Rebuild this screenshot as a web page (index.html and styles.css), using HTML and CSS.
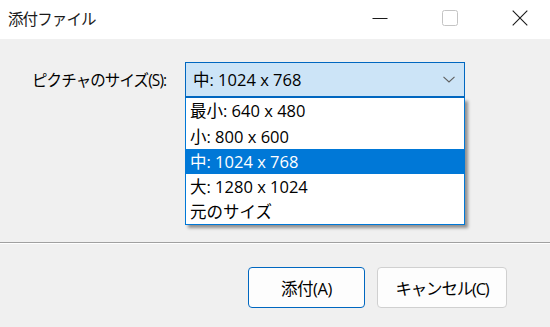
FILE: index.html
```html
<!DOCTYPE html>
<html lang="ja">
<head>
<meta charset="utf-8">
<title>添付ファイル</title>
<link rel="stylesheet" href="styles.css">
</head>
<body>
<div class="window">
  <header class="titlebar">
    <div class="title">添付ファイル</div>
    <div class="controls">
      <span class="ctl"><svg width="16" height="16" viewBox="0 0 16 16"><path d="M0.5 8.5h15" stroke="#1a1a1a" stroke-width="1"/></svg></span>
      <span class="ctl"><svg width="16" height="16" viewBox="0 0 16 16"><rect x="0.5" y="0.5" width="15" height="15" rx="2" fill="none" stroke="#c4c4c4" stroke-width="1"/></svg></span>
      <span class="ctl"><svg width="16" height="16" viewBox="0 0 16 16"><path d="M0.7 0.7L15.3 15.3M15.3 0.7L0.7 15.3" stroke="#1a1a1a" stroke-width="1.1"/></svg></span>
    </div>
  </header>
  <main class="content">
    <div class="row">
      <label class="label">ピクチャのサイズ(S):</label>
      <div class="combo-wrap">
        <div class="combo">
          <span class="combo-text">中: 1024 x 768</span>
          <svg class="chev" width="12" height="7" viewBox="0 0 12 7"><path d="M0.5 0.8L6 6L11.5 0.8" fill="none" stroke="#5f5f5f" stroke-width="1.1"/></svg>
        </div>
        <ul class="dropdown">
          <li>最小: 640 x 480</li>
          <li>小: 800 x 600</li>
          <li class="sel">中: 1024 x 768</li>
          <li>大: 1280 x 1024</li>
          <li>元のサイズ</li>
        </ul>
      </div>
    </div>
  </main>
  <div class="sep"></div>
  <footer class="buttons">
    <button class="btn primary">添付(A)</button>
    <button class="btn cancel">キャンセル(C)</button>
  </footer>
</div>
</body>
</html>
```
FILE: styles.css
```css
html, body {
  margin: 0;
  padding: 0;
}
body {
  width: 550px;
  height: 327px;
  overflow: hidden;
  background: #f0f0f0;
  font-family: "Open Sans", "Noto Sans CJK JP", sans-serif;
  color: #000;
}
.window {
  display: flex;
  flex-direction: column;
  width: 550px;
  height: 327px;
}
.titlebar {
  height: 39px;
  background: #ffffff;
  display: flex;
  align-items: center;
  justify-content: space-between;
}
.title {
  padding-left: 8px;
  font-size: 15.5px;
  letter-spacing: -0.9px;
  line-height: 20px;
  margin-top: -2px;
  color: #1a1a1a;
}
.controls {
  display: flex;
  align-items: center;
  padding-right: 22px;
  gap: 54px;
  margin-top: -4px;
}
.ctl {
  display: flex;
  width: 16px;
  height: 16px;
}
.content {
  height: 203px;
  padding-top: 23px;
  box-sizing: border-box;
}
.row {
  display: flex;
  align-items: flex-start;
}
.label {
  width: 153px;
  padding-left: 32px;
  font-size: 15.5px;
  letter-spacing: -0.9px;
  line-height: 36px;
}
.combo-wrap {
  position: relative;
  width: 280px;
}
.combo {
  height: 36px;
  box-sizing: border-box;
  border: 1px solid #0067c0;
  border-bottom-width: 2px;
  background: #cce4f7;
  display: flex;
  align-items: center;
  justify-content: space-between;
  padding: 0 9px 0 7px;
}
.combo-text {
  font-size: 16.5px;
  line-height: 20px;
  margin-top: 1px;
}
.dropdown {
  position: absolute;
  left: 0;
  top: 36px;
  width: 280px;
  box-sizing: border-box;
  margin: 0;
  padding: 0;
  list-style: none;
  background: #fff;
  border: 1px solid #0078d7;
  border-top: none;
  box-shadow: 3px 3px 3px rgba(0, 0, 0, 0.4);
}
.dropdown li {
  height: 25px;
  line-height: 25px;
  font-size: 16.5px;
  padding-left: 4px;
}
.dropdown li:first-child {
  height: 26px;
}
.dropdown li.sel {
  background: #0078d7;
  color: #fff;
}
.sep {
  height: 1px;
  background: #a0a0a0;
  border-bottom: 1px solid #ffffff;
}
.buttons {
  display: flex;
  justify-content: flex-end;
  gap: 12px;
  padding: 23px 43px 0 0;
}
.btn {
  width: 117px;
  height: 41px;
  box-sizing: border-box;
  border: 1px solid #d0d0d0;
  border-radius: 4px;
  background: #fdfdfd;
  font-family: "Open Sans", "Noto Sans CJK JP", sans-serif;
  font-size: 16.5px;
  letter-spacing: -0.4px;
  color: #000;
  padding: 0;
}
.btn.cancel {
  width: 130px;
  letter-spacing: -1.2px;
}
.btn.primary {
  border-color: #0067c0;
}
```
